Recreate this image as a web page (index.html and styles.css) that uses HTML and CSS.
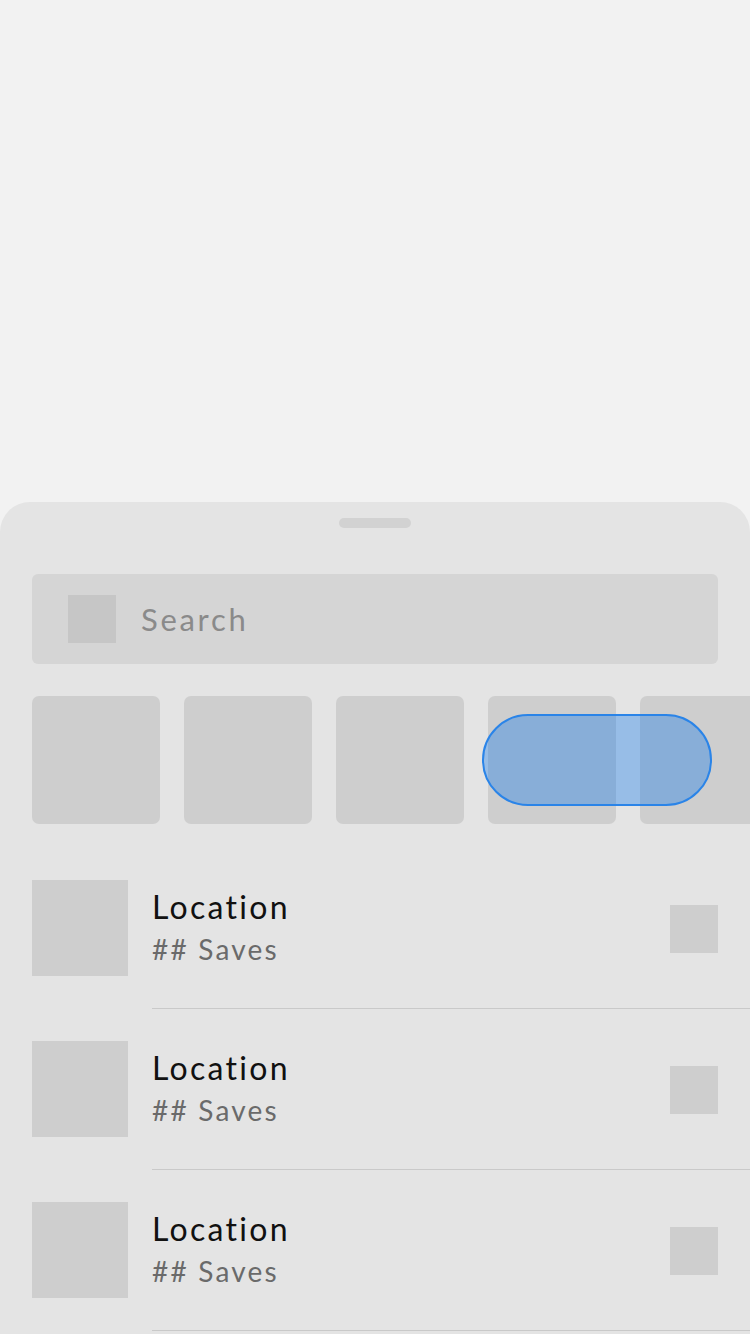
FILE: index.html
```html
<!DOCTYPE html>
<html>
<head>
<meta charset="utf-8">
<link rel="stylesheet" href="styles.css">
</head>
<body>
<div class="page">
  <div class="map"></div>
  <div class="sheet">
    <div class="handle"></div>
    <div class="search">
      <div class="search-icon"></div>
      <span class="search-text">Search</span>
    </div>
    <div class="chips-wrap">
      <div class="chips">
        <div class="chip"></div>
        <div class="chip"></div>
        <div class="chip"></div>
        <div class="chip"></div>
        <div class="chip"></div>
      </div>
      <div class="pill"></div>
    </div>
    <div class="list">
      <div class="row">
        <div class="thumb"></div>
        <div class="info">
          <div class="title">Location</div>
          <div class="sub">## Saves</div>
        </div>
        <div class="action"></div>
      </div>
      <div class="divider"></div>
      <div class="row">
        <div class="thumb"></div>
        <div class="info">
          <div class="title">Location</div>
          <div class="sub">## Saves</div>
        </div>
        <div class="action"></div>
      </div>
      <div class="divider"></div>
      <div class="row">
        <div class="thumb"></div>
        <div class="info">
          <div class="title">Location</div>
          <div class="sub">## Saves</div>
        </div>
        <div class="action"></div>
      </div>
      <div class="divider"></div>
    </div>
  </div>
</div>
</body>
</html>
```
FILE: styles.css
```css
* { box-sizing: border-box; }
html, body {
  margin: 0;
  padding: 0;
  background: #f2f2f2;
  font-family: Lato, "Open Sans", sans-serif;
}
.page {
  width: 750px;
  height: 1334px;
  overflow: hidden;
  display: flex;
  flex-direction: column;
}
.map {
  height: 502px;
  flex: none;
}
.sheet {
  flex: 1;
  background: #e4e4e4;
  border-radius: 30px 30px 0 0;
  padding-top: 16px;
  display: flex;
  flex-direction: column;
}
.handle {
  width: 72px;
  height: 10px;
  border-radius: 5px;
  background: #d2d2d2;
  align-self: center;
}
.search {
  margin: 46px 32px 0;
  height: 90px;
  background: #d5d5d5;
  border-radius: 6px;
  display: flex;
  align-items: center;
  padding-left: 36px;
  gap: 25px;
}
.search-icon {
  width: 48px;
  height: 48px;
  background: #c6c6c6;
}
.search-text {
  font-size: 31px;
  color: #8a8a8a;
  letter-spacing: 2.7px;
}
.chips-wrap {
  position: relative;
  margin-top: 32px;
}
.chips {
  display: flex;
  gap: 24px;
  padding-left: 32px;
  overflow: hidden;
}
.chip {
  flex: none;
  width: 128px;
  height: 128px;
  background: #cecece;
  border-radius: 7px;
}
.pill {
  position: absolute;
  left: 482px;
  top: 18px;
  width: 230px;
  height: 92px;
  border-radius: 46px;
  border: 2px solid #2a84e8;
  background: rgba(14, 118, 236, 0.36);
}
.list {
  margin-top: 24px;
}
.row {
  display: flex;
  align-items: center;
  padding: 32px 32px;
}
.thumb {
  width: 96px;
  height: 96px;
  background: #cecece;
  flex: none;
}
.info {
  flex: 1;
  margin-left: 24px;
  display: flex;
  flex-direction: column;
}
.title {
  font-size: 32px;
  line-height: 40px;
  color: #111;
  letter-spacing: 2.3px;
}
.sub {
  font-size: 28px;
  line-height: 40px;
  margin-top: 2px;
  color: #6a6a6a;
  letter-spacing: 2.2px;
}
.action {
  width: 48px;
  height: 48px;
  margin-top: 2px;
  background: #cecece;
  flex: none;
}
.divider {
  height: 1px;
  margin-left: 152px;
  background: #c9c9c9;
}
```
